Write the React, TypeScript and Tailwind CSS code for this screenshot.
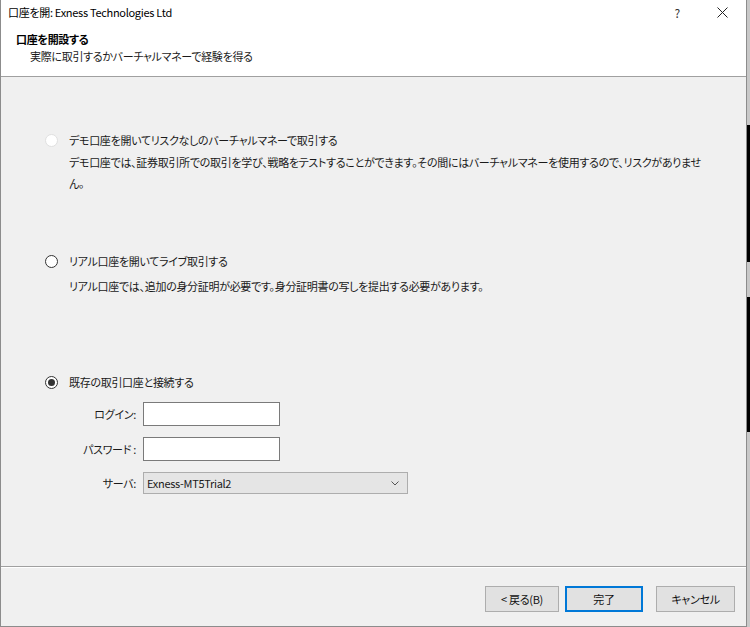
import React from "react";

const jp = "font-['Noto_Sans_CJK_JP','Noto_Sans',sans-serif] [font-feature-settings:'palt'] tracking-[-0.3px]";

const Radio = ({ checked, disabled }: { checked?: boolean; disabled?: boolean }) => (
  <span
    className={`w-[13px] h-[13px] rounded-full border flex items-center justify-center bg-white shrink-0 ${
      disabled ? "border-[#e0e0e0]" : "border-[#333333]"
    }`}
  >
    {checked && <span className="w-[7px] h-[7px] rounded-full bg-[#333333]" />}
  </span>
);

const Field = ({ label, children }: { label: string; children: React.ReactNode }) => (
  <div className="flex items-center">
    <div className="w-[98px] text-right pr-[7px] text-[11px] text-[#1a1a1a]">{label}</div>
    {children}
  </div>
);

const WinButton = ({ label, primary, w }: { label: string; primary?: boolean; w: string }) => (
  <button
    className={`h-[26px] ${w} text-[11px] bg-[#e1e1e1] border ${
      primary ? "border-[#0078d7] border-[2px]" : "border-[#adadad]"
    } text-[#111]`}
  >
    {label}
  </button>
);

export default function App() {
  return (
    <div className={`w-[750px] h-[627px] flex bg-[#f0f0f0] ${jp}`}>
      <div className="w-[747px] h-full flex flex-col border-l border-r border-b border-[#8c8c8c]">
        {/* title bar */}
        <div className="h-[25px] bg-white flex items-center pl-[7px] text-[11px] text-black">
          <span>口座を開: Exness Technologies Ltd</span>
          <span className="ml-auto mr-[37px] text-[12px] text-[#333]">?</span>
          <svg width="11" height="11" viewBox="0 0 11 11" className="mr-[18px]">
            <path d="M0.5 0.5 L10.5 10.5 M10.5 0.5 L0.5 10.5" stroke="#222" strokeWidth="1" />
          </svg>
        </div>
        {/* header */}
        <div className="h-[52px] bg-white border-b border-[#a0a0a0] pl-[15px] pt-[5px]">
          <div className="text-[11px] font-bold text-black leading-[18px]">口座を開設する</div>
          <div className="text-[11px] text-[#1a1a1a] leading-[16px] pl-[14px]">実際に取引するかバーチャルマネーで経験を得る</div>
        </div>
        {/* body */}
        <div className="flex-1 bg-[#f0f0f0] pl-[44px] pt-[54px] text-[11px] text-[#1a1a1a]">
          <div className="flex items-center gap-[11px] h-[18px]">
            <Radio disabled />
            <span>デモ口座を開いてリスクなしのバーチャルマネーで取引する</span>
          </div>
          <div className="pl-[24px] mt-[3px] leading-[21px] whitespace-nowrap">
            デモ口座では、証券取引所での取引を学び、戦略をテストすることができます。その間にはバーチャルマネーを使用するので、リスクがありませ
            <br />
            ん。
          </div>

          <div className="flex items-center gap-[11px] h-[18px] mt-[58px]">
            <Radio />
            <span>リアル口座を開いてライブ取引する</span>
          </div>
          <div className="pl-[24px] mt-[6px] leading-[20px]">
            リアル口座では、追加の身分証明が必要です。身分証明書の写しを提出する必要があります。
          </div>

          <div className="flex items-center gap-[11px] h-[18px] mt-[77px]">
            <Radio checked />
            <span>既存の取引口座と接続する</span>
          </div>
          <div className="flex flex-col gap-[11px] mt-[11px]">
            <Field label="ログイン:">
              <div className="w-[137px] h-[24px] bg-white border border-[#7a7a7a]" />
            </Field>
            <Field label="パスワード :">
              <div className="w-[137px] h-[24px] bg-white border border-[#7a7a7a]" />
            </Field>
            <Field label="サーバ:">
              <div className="w-[265px] h-[22px] bg-[#e5e5e5] border border-[#adadad] flex items-center pl-[3px] pr-[8px]">
                <span className="text-[11px]">Exness-MT5Trial2</span>
                <svg width="8" height="5" viewBox="0 0 8 5" className="ml-auto">
                  <path d="M0.5 0.5 L4 4 L7.5 0.5" stroke="#555" strokeWidth="1" fill="none" />
                </svg>
              </div>
            </Field>
          </div>
        </div>
        {/* separator */}
        <div className="h-[2px] border-t border-[#a0a0a0] bg-white" />
        {/* footer */}
        <div className="h-[58px] bg-[#f0f0f0] flex items-start pt-[18px] pl-[484px]">
          <WinButton label="< 戻る(B)" w="w-[74px]" />
          <div className="w-[6px]" />
          <WinButton label="完了" primary w="w-[78px]" />
          <div className="w-[13px]" />
          <WinButton label="キャンセル" w="w-[79px]" />
        </div>
      </div>
      {/* desktop behind */}
      <div className="w-[3px] h-full flex flex-col">
        <div className="h-[125px] bg-[#c8c8c8]" />
        <div className="h-[137px] bg-black" />
        <div className="h-[35px] bg-[#c8c8c8]" />
        <div className="h-[135px] bg-black" />
        <div className="flex-1 bg-[#c8c8c8]" />
      </div>
    </div>
  );
}
